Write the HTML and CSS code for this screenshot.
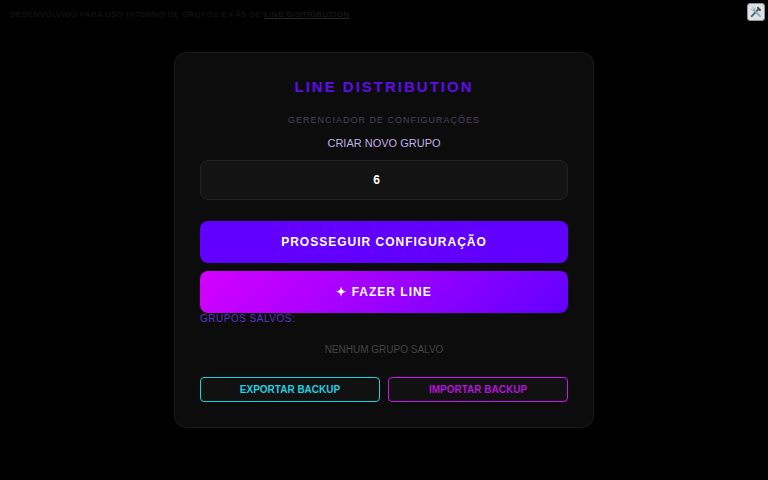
FILE: index.html
```html
<!DOCTYPE html>
<html lang="pt">
<head>
<meta charset="utf-8">
<title>Line Distribution</title>
<link rel="stylesheet" href="styles.css">
</head>
<body>
<p class="notice">DESENVOLVIDO PARA USO INTERNO DE GRUPOS E FÃS DE <a href="#">LINE DISTRIBUTION</a></p>
<button class="tool-btn" type="button" aria-label="Ferramentas">
<svg viewBox="0 0 16 16" width="14" height="14"><path d="M3.2 12.8 10.6 5" stroke="#56616b" stroke-width="2.2" stroke-linecap="round"/><path d="M9 2.6 10.6 2 14 5.4 12.8 7.2 11 6.4 9.8 5.2Z" fill="#47525c"/><path d="M12.6 12.6 5.8 6" stroke="#7aa9c0" stroke-width="2" stroke-linecap="round"/><path d="M2 3.6 4 5.4 5.4 4 3.6 2.1A3 3 0 0 1 6.8 5.6L5.6 6.8A3 3 0 0 1 2 3.6Z" fill="#8db8cc"/></svg>
</button>
<main class="card">
<h1 class="title">LINE DISTRIBUTION</h1>
<p class="subtitle">GERENCIADOR DE CONFIGURAÇÕES</p>
<label class="field-label" for="n">CRIAR NOVO GRUPO</label>
<input class="field" id="n" type="number" value="6">
<button class="btn btn-primary" type="button">PROSSEGUIR CONFIGURAÇÃO</button>
<button class="btn btn-line" type="button">✦ FAZER LINE</button>
<h2 class="saved-title">GRUPOS SALVOS:</h2>
<p class="empty">NENHUM GRUPO SALVO</p>
<div class="backup">
<button class="outline outline-cyan" type="button">EXPORTAR BACKUP</button>
<button class="outline outline-magenta" type="button">IMPORTAR BACKUP</button>
</div>
</main>
</body>
</html>
```
FILE: styles.css
```css
* { box-sizing: border-box; }
html, body { margin: 0; height: 100%; }
body {
  background: #000;
  font-family: "Liberation Sans", Arial, sans-serif;
  overflow: hidden;
  padding-top: 52px;
}
.notice {
  position: absolute;
  left: 10px;
  top: 9px;
  margin: 0;
  font-size: 8px;
  line-height: 12px;
  letter-spacing: .4px;
  color: #191919;
  white-space: nowrap;
}
.notice a { color: #222; letter-spacing: .55px; }
.tool-btn {
  position: absolute;
  top: 3px;
  right: 3px;
  width: 18px;
  height: 18px;
  padding: 0;
  border: 1px solid #8f9599;
  border-radius: 3px;
  background: #dfe1e2;
  display: flex;
  align-items: center;
  justify-content: center;
}
.card {
  width: 420px;
  height: 376px;
  margin: 0 auto;
  padding: 25px;
  background: #0c0c0c;
  border: 1px solid #1a1a1a;
  border-radius: 12px;
  display: flex;
  flex-direction: column;
}
.title {
  margin: 0;
  font-size: 15px;
  line-height: 18px;
  font-weight: 700;
  letter-spacing: 2px;
  color: #5f0cea;
  text-align: center;
}
.subtitle {
  margin: 18px 0 0;
  font-size: 9px;
  line-height: 12px;
  letter-spacing: 1px;
  color: #4a4060;
  text-align: center;
}
.field-label {
  margin-top: 10px;
  font-size: 11px;
  line-height: 14px;
  color: #bfaee6;
  text-align: center;
}
.field {
  margin-top: 10px;
  height: 40px;
  width: 100%;
  background: #131313;
  border: 1px solid #222;
  border-radius: 8px;
  color: #fff;
  font: 700 12px "Liberation Sans", Arial, sans-serif;
  text-align: center;
}
.btn {
  width: 100%;
  height: 42px;
  border: 0;
  border-radius: 8px;
  color: #fff;
  font: 700 12px "Liberation Sans", Arial, sans-serif;
  letter-spacing: 1px;
}
.btn-primary { margin-top: 21px; background: #6200ff; }
.btn-line { margin-top: 8px; background: linear-gradient(135deg, #d500ff, #6200ff); }
.saved-title {
  margin: 0;
  font-size: 10px;
  line-height: 12px;
  font-weight: 400;
  letter-spacing: .5px;
  color: #5d35c4;
}
.empty {
  margin: 19px 0 0;
  font-size: 10px;
  line-height: 12px;
  color: #444;
  text-align: center;
}
.backup {
  margin-top: 21px;
  display: flex;
  gap: 8px;
}
.outline {
  flex: 1;
  height: 25px;
  padding: 0;
  background: #111;
  border-radius: 4px;
  font: 700 10px "Liberation Sans", Arial, sans-serif;
}
.outline-cyan { border: 1px solid #1fd0e0; color: #1fd0e0; }
.outline-magenta { border: 1px solid #c916ee; color: #b414d8; }
```
